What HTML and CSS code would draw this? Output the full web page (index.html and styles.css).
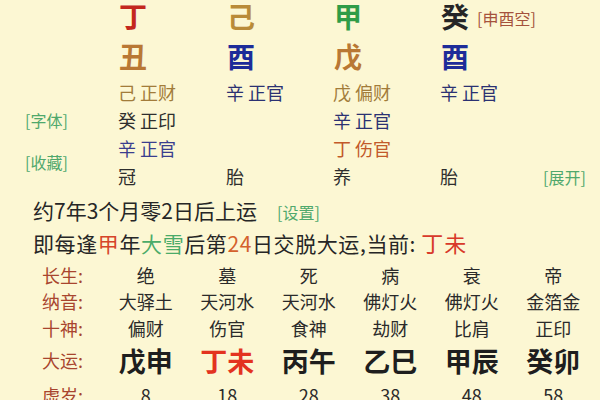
FILE: index.html
```html
<!DOCTYPE html>
<html lang="zh">
<head>
<meta charset="utf-8">
<link rel="stylesheet" href="styles.css">
</head>
<body>
<div class="page">
  <div class="pillars">
    <div class="cell"></div>
    <div class="cell big c-red">丁</div>
    <div class="cell big c-gold">己</div>
    <div class="cell big c-green">甲</div>
    <div class="cell big c-black">癸<span class="kong">[申酉空]</span></div>
    <div class="cell"></div>

    <div class="cell"></div>
    <div class="cell big c-earth">丑</div>
    <div class="cell big c-blue">酉</div>
    <div class="cell big c-earth">戊</div>
    <div class="cell big c-blue">酉</div>
    <div class="cell"></div>

    <div class="cell"></div>
    <div class="cell small s-gold">己 正财</div>
    <div class="cell small s-blue">辛 正官</div>
    <div class="cell small s-gold">戊 偏财</div>
    <div class="cell small s-blue">辛 正官</div>
    <div class="cell"></div>

    <div class="side">
      <span class="link">[字体]</span>
      <span class="link">[收藏]</span>
    </div>
    <div class="cell small s-black">癸 正印</div>
    <div class="cell"></div>
    <div class="cell small s-blue">辛 正官</div>
    <div class="cell"></div>
    <div class="cell"></div>

    <div class="cell small s-blue2">辛 正官</div>
    <div class="cell"></div>
    <div class="cell small s-orange">丁 伤官</div>
    <div class="cell"></div>
    <div class="cell"></div>

    <div class="cell small s-black">冠</div>
    <div class="cell small s-black">胎</div>
    <div class="cell small s-black">养</div>
    <div class="cell small s-black">胎</div>
    <div class="cell"><span class="link">[展开]</span></div>
  </div>

  <div class="line first">约7年3个月零2日后上运<span class="link setting">[设置]</span></div>
  <div class="line second">即每逢<span class="t-red">甲</span>年<span class="t-green">大雪</span>后第<span class="t-orange">24</span>日交脱大运,当前: <span class="t-cur">丁未</span></div>

  <div class="table">
    <div class="lab">长生:</div>
    <div class="val">绝</div><div class="val">墓</div><div class="val">死</div><div class="val">病</div><div class="val">衰</div><div class="val">帝</div>

    <div class="lab">纳音:</div>
    <div class="val">大驿土</div><div class="val">天河水</div><div class="val">天河水</div><div class="val">佛灯火</div><div class="val">佛灯火</div><div class="val">金箔金</div>

    <div class="lab">十神:</div>
    <div class="val">偏财</div><div class="val">伤官</div><div class="val">食神</div><div class="val">劫财</div><div class="val">比肩</div><div class="val">正印</div>

    <div class="lab">大运:</div>
    <div class="val dy">戊申</div><div class="val dy dy-cur">丁未</div><div class="val dy">丙午</div><div class="val dy">乙巳</div><div class="val dy">甲辰</div><div class="val dy">癸卯</div>

    <div class="lab">虚岁:</div>
    <div class="val">8</div><div class="val">18</div><div class="val">28</div><div class="val">38</div><div class="val">48</div><div class="val">58</div>
  </div>
</div>
</body>
</html>
```

FILE: styles.css
```css
html, body {
  margin: 0;
  padding: 0;
  background: #fcf7d3;
}
body {
  font-family: "Noto Sans CJK SC", "Noto Sans", sans-serif;
  color: #262626;
  width: 600px;
  height: 400px;
  overflow: hidden;
}
.page {
  width: 600px;
}
.pillars {
  display: grid;
  grid-template-columns: 118px 108px 107px 107px 103px 1fr;
  grid-template-rows: 34px 45px 28px 28px 28px 28px;
  align-items: center;
}
.cell {
  white-space: nowrap;
  line-height: 1.3;
}
.big {
  font-size: 28px;
  line-height: 1.2;
  font-weight: 700;
  padding-left: 1px;
}
.small {
  font-size: 18px;
}
.c-red { color: #c3271d; }
.c-gold { color: #b98b38; }
.c-green { color: #2f9c47; }
.c-black { color: #262626; }
.c-earth { color: #b97834; }
.c-blue { color: #1d2c99; }
.s-gold { color: #a27c3a; }
.s-blue { color: #2b3172; }
.s-blue2 { color: #3a3e8e; }
.s-black { color: #2e2e2e; }
.s-orange { color: #c2592a; }
.kong {
  font-size: 16px;
  font-weight: 400;
  color: #a5523c;
  margin-left: 8px;
  vertical-align: 3px;
}
.link {
  color: #4fa86c;
  font-size: 16px;
}
.side {
  grid-column: 1;
  grid-row: 4 / 7;
  align-self: start;
  display: flex;
  flex-direction: column;
  align-items: flex-start;
  gap: 22px;
  padding-left: 25px;
  padding-top: 3px;
  line-height: 20px;
}
.line {
  font-size: 21px;
  line-height: 30px;
  padding-left: 33px;
  white-space: nowrap;
}
.line.first {
  margin-top: 4px;
}
.line.second {
  letter-spacing: 0.6px;
}
.setting {
  margin-left: 20px;
  letter-spacing: 0;
}
.t-red { color: #d6452a; }
.t-green { color: #4aab69; }
.t-orange { color: #d4612c; }
.t-cur {
  color: #d8392a;
  font-size: 22px;
  letter-spacing: 1px;
}
.table {
  display: grid;
  grid-template-columns: 105px repeat(6, 81.5px);
  grid-template-rows: 26px 26px 27px 38px 32px;
  align-items: center;
  margin-top: 5px;
}
.lab {
  padding-left: 42px;
  font-size: 18px;
  color: #a8452e;
  line-height: 1.3;
}
.val {
  text-align: center;
  font-size: 18px;
  line-height: 1.3;
  color: #2a2a2a;
}
.dy {
  font-size: 27px;
  line-height: 1.3;
  font-weight: 700;
  color: #1e1e1e;
}
.dy-cur {
  color: #e3331f;
}
```
